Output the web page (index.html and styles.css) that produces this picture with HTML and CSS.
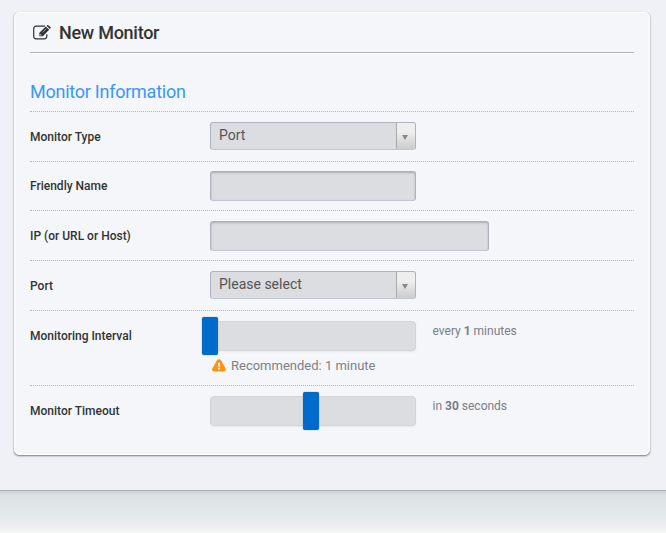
FILE: index.html
```html
<!DOCTYPE html>
<html lang="en">
<head>
<meta charset="utf-8">
<title>New Monitor</title>
<link rel="stylesheet" href="styles.css">
</head>
<body>
<main class="page">
  <form class="panel">
    <h1 class="title">
      <svg class="edit" viewBox="0 0 18 15" width="18" height="15" fill="none">
        <path d="M12 1.2H3.2Q.7 1.2.7 3.7V11.3Q.7 13.8 3.2 13.8H11.3Q13.8 13.8 13.8 11.3V9.3" stroke="#333" stroke-width="1.2"/>
        <path d="M6.4 7.7L12.8 1.4L16.2 4.7L9.8 11.2H6.4ZM13.5.8L14.1.3Q14.9-.2 15.6.4L17.4 2.1Q18 2.8 17.4 3.5L16.8 4.1Z" fill="#333"/>
        <path d="M7.4 8.9V10.2H8.7M9.6 7.4L13.3 3.7" stroke="#e8e9ec" stroke-width=".6"/>
      </svg>
      <span>New Monitor</span>
    </h1>
    <h2 class="section">Monitor Information</h2>
    <div class="row">
      <label class="label">Monitor Type</label>
      <div class="select"><span class="value">Port</span><span class="arrow"></span></div>
    </div>
    <div class="row short">
      <label class="label">Friendly Name</label>
      <div class="input"></div>
    </div>
    <div class="row">
      <label class="label">IP (or URL or Host)</label>
      <div class="input wide"></div>
    </div>
    <div class="row">
      <label class="label">Port</label>
      <div class="select"><span class="value">Please select</span><span class="arrow"></span></div>
    </div>
    <div class="row tall">
      <label class="label">Monitoring Interval</label>
      <div class="field">
        <div class="slider"><span class="handle start"></span></div>
        <div class="hint">
          <svg class="warning" viewBox="0 0 14 13" width="14" height="13"><path d="M4.9 1.6Q7-1.2 9.1 1.6L13.5 9.2Q14.6 12.3 12 12.6H2Q-.6 12.3.5 9.2Z" fill="#ff9210"/><path d="M6 3.8H8L7.7 7.8H6.3ZM6.1 8.8H7.9V10.5H6.1Z" fill="#fff"/></svg>
          <span>Recommended: 1 minute</span>
        </div>
      </div>
      <div class="note">every <b>1</b> minutes</div>
    </div>
    <div class="row last">
      <label class="label">Monitor Timeout</label>
      <div class="field">
        <div class="slider"><span class="handle middle"></span></div>
      </div>
      <div class="note">in <b>30</b> seconds</div>
    </div>
  </form>
</main>
<footer class="footer"></footer>
</body>
</html>
```
FILE: styles.css
```css
* { box-sizing: border-box; }
body {
  margin: 0;
  height: 533px;
  overflow: hidden;
  background: #f0f1f6;
  color: #333;
  font-family: Roboto, sans-serif;
}
.page { height: 490px; padding: 12px 16px 0 14px; }
.panel {
  height: 443px;
  padding: 0 15px;
  background: #f4f6fa;
  border: 1px solid #fff;
  border-radius: 5px;
  box-shadow: 0 1px 2px rgba(0, 0, 0, .5);
}
.title {
  display: flex;
  align-items: center;
  gap: 8px;
  height: 40px;
  margin: 0;
  padding-left: 3px;
  border-bottom: 1px solid #b5b5b7;
  box-shadow: 0 1px #fff;
  font-size: 18px;
  font-weight: 500;
  letter-spacing: -.27px;
  line-height: 24px;
}
.edit { margin-top: -1px; }
.section {
  height: 59px;
  margin: 0;
  padding-top: 27px;
  border-bottom: 1px dotted #b5b7bb;
  color: #3a96fa;
  font-size: 18px;
  font-weight: 400;
  letter-spacing: -.25px;
  line-height: 24px;
}
.row {
  display: flex;
  align-items: flex-start;
  height: 50px;
  padding-top: 10px;
  border-bottom: 1px dotted #b5b7bb;
}
.row.short { height: 49px; padding-top: 9px; }
.row.tall { height: 75px; }
.row.last { border-bottom: 0; }
.label {
  width: 180px;
  padding-top: 7px;
  font-size: 12px;
  font-weight: 500;
  line-height: 16px;
}
.input, .select {
  width: 206px;
  border: 1px solid #b0b1bf;
  border-bottom-color: #c3c5d3;
  border-radius: 3px;
  background: #dbdde0;
}
.input { height: 30px; box-shadow: inset 0 1px 2px rgba(0, 0, 0, .22); }
.input.wide { width: 279px; }
.select { display: flex; height: 28px; overflow: hidden; }
.value {
  flex: 1;
  padding-left: 8px;
  color: #555;
  font-size: 14px;
  line-height: 25px;
}
.arrow {
  display: flex;
  width: 19px;
  align-items: center;
  justify-content: center;
  padding-right: 2px;
  border-left: 1px solid #aaa;
  background: linear-gradient(#eee 35%, #ccc);
}
.arrow::after {
  content: "";
  margin-top: 3px;
  border: 3px solid transparent;
  border-top: 5px solid #888;
  border-bottom: 0;
}
.field { width: 206px; }
.slider {
  position: relative;
  height: 30px;
  border: 1px solid #d3d5d6;
  border-radius: 4px;
  background: #dbdde0;
  box-shadow: 0 1px 2px rgba(0, 0, 0, .06);
}
.handle {
  position: absolute;
  top: -5px;
  width: 16px;
  height: 38px;
  border-radius: 2px;
  background: #006bcd;
  box-shadow: 0 0 1px 0 rgba(0, 60, 120, .7);
}
.start { left: -9px; }
.middle { left: 92px; }
.hint {
  display: flex;
  align-items: center;
  gap: 5px;
  padding: 6px 0 0 2px;
  color: #808085;
  font-size: 13px;
  line-height: 18px;
}
.warning { margin-top: -2px; }
.note {
  padding: 2px 0 0 16.5px;
  color: #7b7d87;
  font-size: 12px;
  line-height: 16px;
}
.note b { font-weight: 700; }
.footer {
  height: 43px;
  border-top: 1px solid #a9aeb3;
  background: linear-gradient(#cdd2d6, #dce1e4 4px, #e5eaed 28px, #f4f5f5);
}
```
